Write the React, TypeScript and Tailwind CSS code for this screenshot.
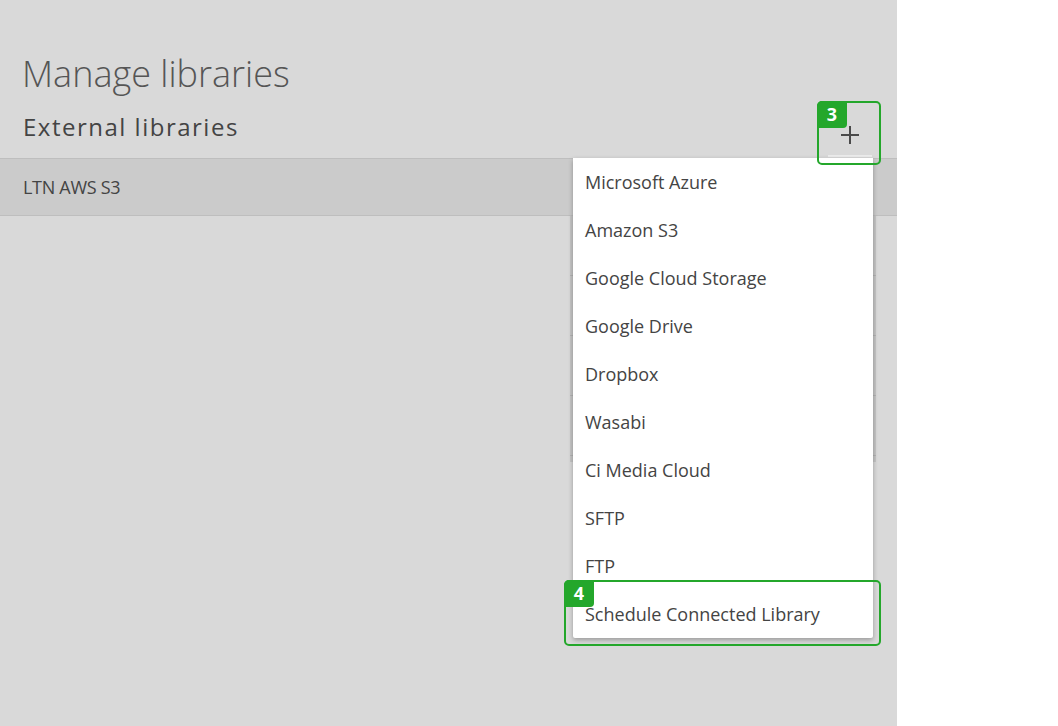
import React from 'react';

const providers = [
    'Microsoft Azure',
    'Amazon S3',
    'Google Cloud Storage',
    'Google Drive',
    'Dropbox',
    'Wasabi',
    'Ci Media Cloud',
    'SFTP',
    'FTP',
    'Schedule Connected Library',
];

const Callout: React.FC<{ n: string; className: string }> = ({ n, className }) => (
    <div className={`absolute border-2 border-[#24a72b] rounded-[5px] pointer-events-none ${className}`}>
        <span className="absolute -left-[2px] -top-[2px] w-[30px] h-[27px] bg-[#24a72b] text-white font-bold text-[18px] leading-[27px] text-center rounded-tl-[5px] rounded-br-[4px]">
            {n}
        </span>
    </div>
);

const PlusIcon: React.FC = () => (
    <svg width="20" height="20" viewBox="0 0 20 20" fill="none" stroke="#4a4a4a" strokeWidth="2">
        <path d="M10 1v18M1 10h18" />
    </svg>
);

export default function App() {
    return (
        <div className="flex w-[1058px] h-[726px] bg-white font-['Open_Sans',sans-serif]">
            <div className="relative w-[897px] h-full bg-[#d9d9d9]">
                <h1 className="pt-[52px] pl-[22px] text-[36px] leading-[44px] font-light text-[#555]">Manage libraries</h1>

                <div className="flex justify-between h-[62px]">
                    <h2 className="mt-[16px] pl-[23px] text-[24px] leading-[30px] tracking-[1.5px] text-[#444]">
                        External libraries
                    </h2>
                    <button className="relative mt-[16px] mr-[25px] w-[44px] h-[46px] flex items-center justify-center">
                        <PlusIcon />
                        <span className="absolute bottom-[1px] left-0 right-0 h-[2px] bg-[#ececec]" />
                    </button>
                </div>

                <div className="h-[58px] bg-[#cbcbcb] border-y border-[#bebebe] flex items-center pl-[23px]">
                    <span className="text-[18px] tracking-[-0.3px] text-[#444]">LTN AWS S3</span>
                </div>

                {/* panel underneath the menu */}
                <div className="absolute left-[570px] top-[216px] w-[306px] h-[246px] bg-[#c6c6c6] flex flex-col">
                    {[0, 1, 2, 3].map(i => (
                        <div key={i} className="h-[60px] border-b border-[#b4b4b4]" />
                    ))}
                </div>

                <ul className="absolute left-[573px] top-[158px] w-[300px] bg-white shadow-[0_2px_5px_rgba(0,0,0,0.3)] rounded-b-[2px]">
                    {providers.map(p => (
                        <li key={p} className="h-[48px] flex items-center px-[12px] text-[18px] text-[#444]">
                            {p}
                        </li>
                    ))}
                </ul>

                <Callout n="3" className="left-[817px] top-[101px] w-[64px] h-[64px]" />
                <Callout n="4" className="left-[564px] top-[580px] w-[317px] h-[66px]" />
            </div>
            <div className="flex-1" />
        </div>
    );
}
